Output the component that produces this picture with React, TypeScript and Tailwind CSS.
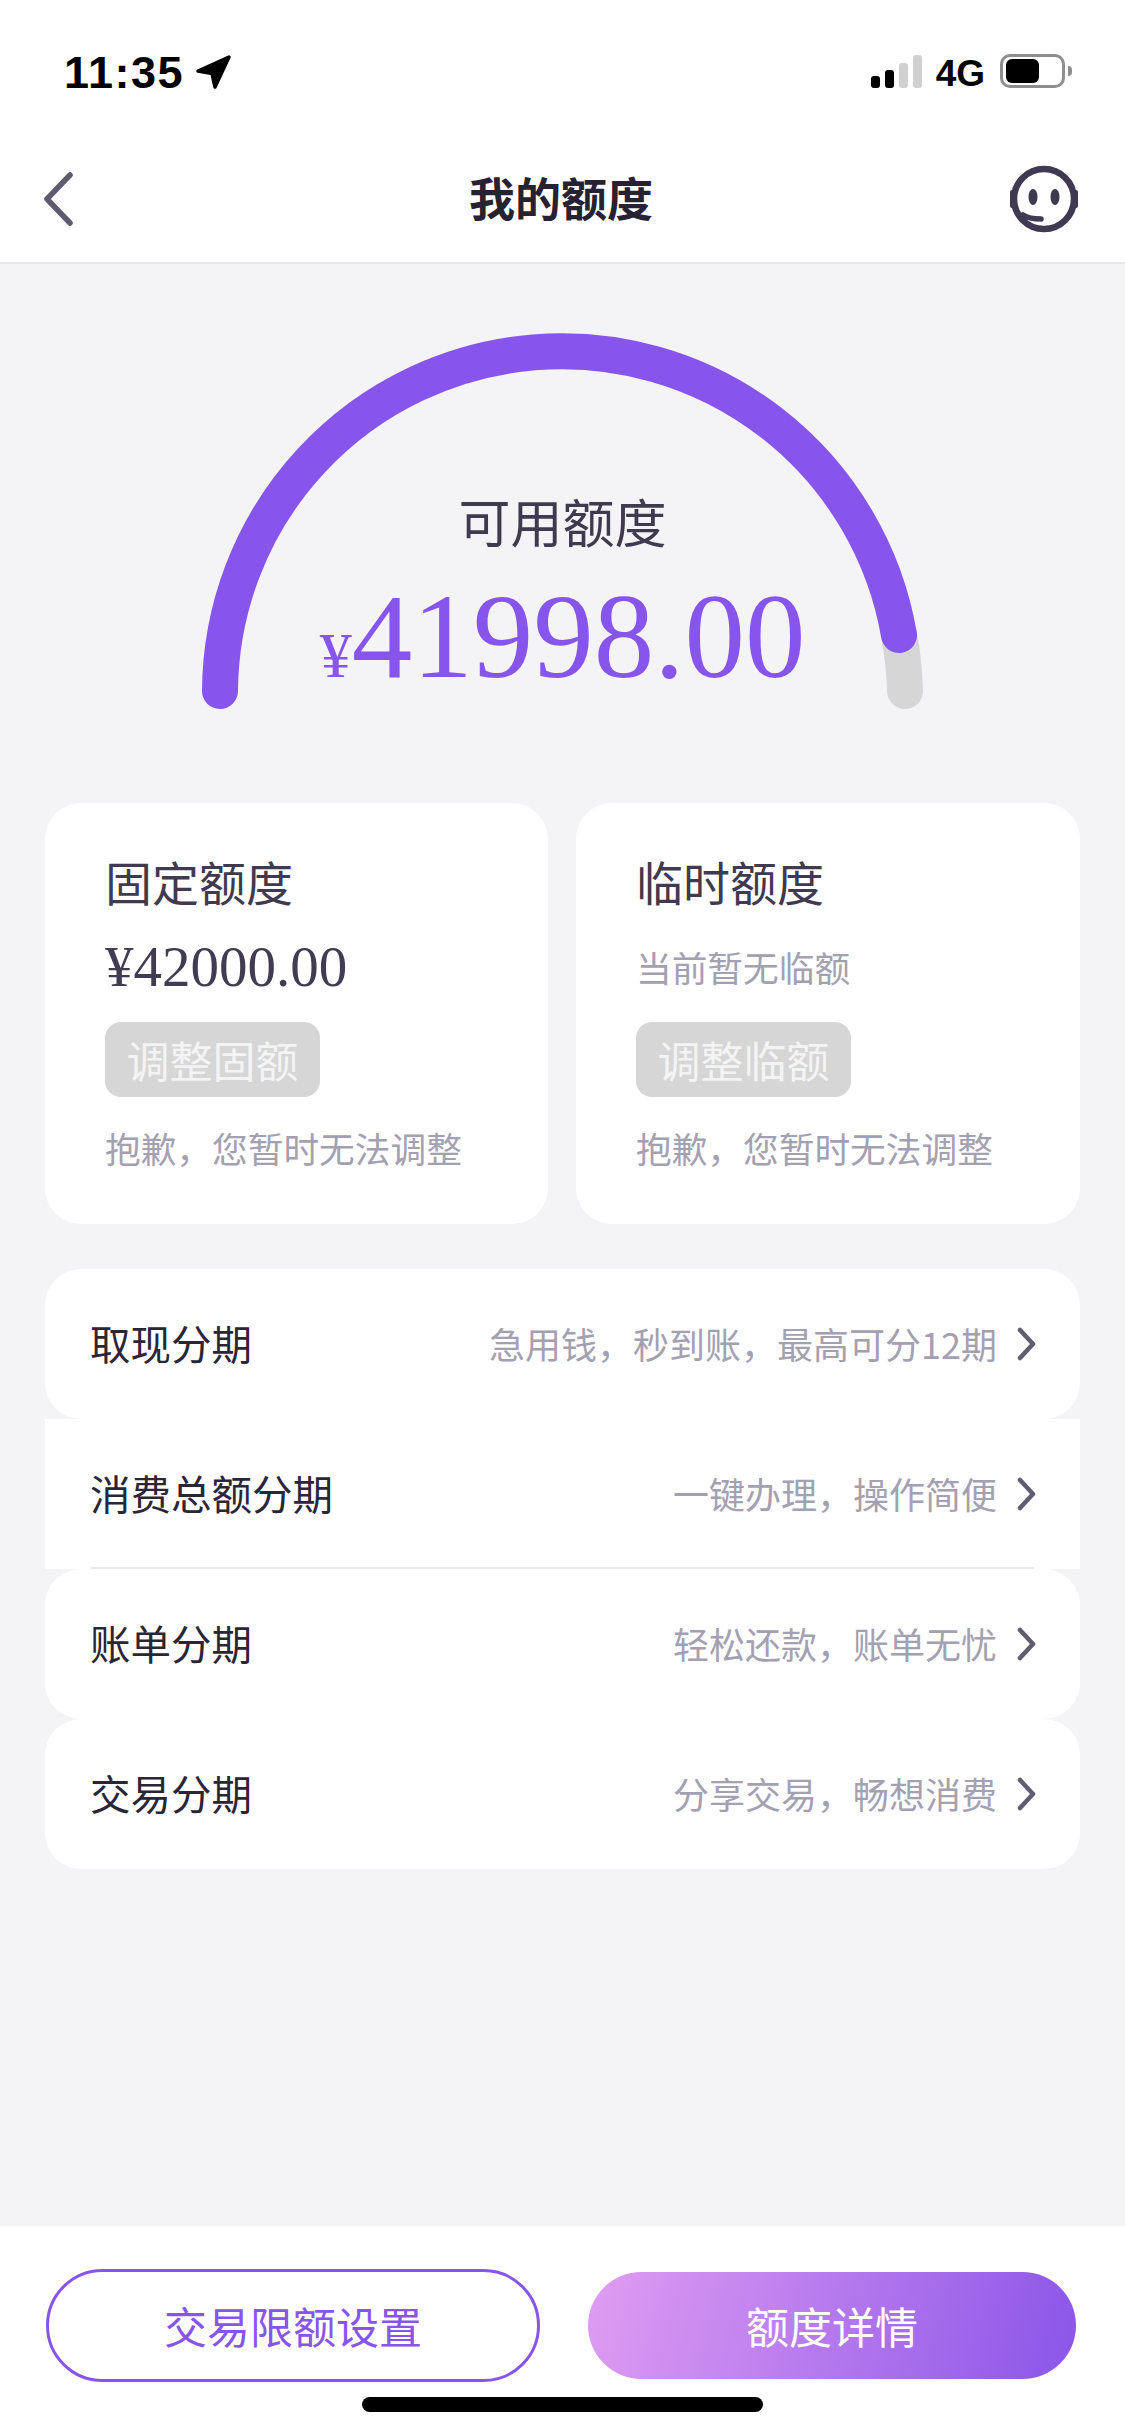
const cjk = "font-['Noto_Sans_CJK_SC','Noto_Sans',sans-serif]";

const StatusBar = () => (
    <div className="flex h-[120px] items-start justify-between pl-[64px] pr-[53px] pt-[54px]">
        <div className="flex items-start">
            <span className="font-['Liberation_Sans',sans-serif] text-[45px] font-bold leading-[38px] tracking-[1.5px] text-black">11:35</span>
            <svg className="ml-[11px]" width="38" height="38" viewBox="0 0 38 38">
                <path d="M34 3 L3 17 L17 19.5 L20 33 Z" fill="#000" stroke="#000" strokeWidth="3.5" strokeLinejoin="round"/>
            </svg>
        </div>
        <div className="flex h-[34px] items-end">
            {/* signal */}
            <div className="flex items-end gap-[5px]">
                <div className="h-[12px] w-[9px] rounded-[3px] bg-black"/>
                <div className="h-[18px] w-[9px] rounded-[3px] bg-black"/>
                <div className="h-[25px] w-[9px] rounded-[3px] bg-[#d0d0d0]"/>
                <div className="h-[33px] w-[9px] rounded-[3px] bg-[#d0d0d0]"/>
            </div>
            <span className="ml-[14px] font-['Liberation_Sans',sans-serif] text-[37px] font-bold leading-[28px] text-black">4G</span>
            {/* battery */}
            <div className="ml-[15px] flex items-center">
                <div className="flex h-[34px] w-[65px] items-center rounded-[10px] border-[3px] border-[#8e8e8e] pl-[3px]">
                    <div className="h-[24px] w-[33px] rounded-[6px] bg-black"/>
                </div>
                <div className="ml-[3px] h-[10px] w-[4px] rounded-r-full bg-[#8e8e8e]"/>
            </div>
        </div>
    </div>
);

const NavBar = () => (
    <div className="grid h-[144px] grid-cols-[70px_1fr_70px] items-center border-b-2 border-[#e8e8ea] bg-white pl-[43px] pr-[46px] pt-[15px]">
        <svg width="30" height="54" viewBox="0 0 30 54" fill="none">
            <path d="M27 3 L4 27 L27 51" stroke="#5f5a6e" strokeWidth="5.5" strokeLinecap="round" strokeLinejoin="round"/>
        </svg>
        <span className={`${cjk} pb-[6px] text-center text-[46px] font-bold leading-[60px] text-[#262233]`}>我的额度</span>
        <svg width="70" height="70" viewBox="0 0 70 70" fill="none">
            <circle cx="35" cy="35" r="30" stroke="#3f3a52" strokeWidth="6.5"/>
            <rect x="1" y="26" width="5" height="18" rx="2" fill="#3f3a52"/>
            <rect x="64" y="26" width="5" height="18" rx="2" fill="#3f3a52"/>
            <ellipse cx="24" cy="33" rx="4.5" ry="8" fill="#3f3a52"/>
            <ellipse cx="46" cy="33" rx="4.5" ry="8" fill="#3f3a52"/>
            <path d="M14 51 Q20 55 32 55" stroke="#3f3a52" strokeWidth="5.5" strokeLinecap="round"/>
        </svg>
    </div>
);

const Gauge = () => (
    <div className="relative h-[539px]">
        <svg className="absolute left-[200px] top-[66px]" width="725" height="380" viewBox="200 330 725 380" fill="none">
            <path d="M905 691 A342 342 0 0 0 899 635" stroke="#d6d6d6" strokeWidth="36" strokeLinecap="round"/>
            <path d="M220 691 A342 342 0 0 1 899 635" stroke="#8855ec" strokeWidth="36" strokeLinecap="round"/>
        </svg>
        <div className="absolute inset-x-0 top-[222px] flex flex-col items-center">
            <span className={`${cjk} text-[52px] leading-[70px] text-[#3f3a4f]`}>可用额度</span>
            <div className="mt-[20px] flex items-baseline font-['Liberation_Serif',serif] leading-[120px] text-[#8855ec]">
                <span className="text-[64px]">¥</span>
                <span className="text-[121px]">41998.00</span>
            </div>
        </div>
    </div>
);

const QuotaCard = ({title, value, valueIsMoney, action}: { title: string; value: string; valueIsMoney?: boolean; action: string }) => (
    <div className="flex h-[421px] flex-col items-start rounded-[36px] bg-white pl-[60px] pt-[45px]">
        <span className={`${cjk} text-[47px] leading-[66px] text-[#3f3a4f]`}>{title}</span>
        <div className="mt-[20px] flex h-[66px] items-center">
            {valueIsMoney ? (
                <span className="font-['Liberation_Serif',serif] text-[57px] text-[#413c52]">{value}</span>
            ) : (
                <span className={`${cjk} text-[35.7px] text-[#a3a1b1]`}>{value}</span>
            )}
        </div>
        <div className={`${cjk} mt-[22px] flex h-[75px] w-[215px] items-center justify-center rounded-[16px] bg-[#d6d6d6] text-[43px] text-[#f4f4f4]`}>
            {action}
        </div>
        <span className={`${cjk} mt-[26px] text-[35.7px] leading-[50px] text-[#a3a1b1]`}>抱歉，您暂时无法调整</span>
    </div>
);

const rows = [
    {title: "取现分期", hint: "急用钱，秒到账，最高可分12期", shape: "rounded-[36px]"},
    {title: "消费总额分期", hint: "一键办理，操作简便", shape: "", divider: true},
    {title: "账单分期", hint: "轻松还款，账单无忧", shape: "rounded-[36px]"},
    {title: "交易分期", hint: "分享交易，畅想消费", shape: "rounded-[36px]"},
];

const InstallmentRow = ({title, hint, shape, divider}: { title: string; hint: string; shape: string; divider?: boolean }) => (
    <div className={`relative flex h-[150px] items-center justify-between bg-white pl-[45px] pr-[43px] ${shape}`}>
        <span className={`${cjk} pb-[2px] text-[40.5px] leading-[56px] text-[#2a2637]`}>{title}</span>
        <div className="flex items-center">
            <span className={`${cjk} pb-[2px] text-[36px] leading-[50px] text-[#a3a1b1]`}>{hint}</span>
            <svg className="ml-[20px]" width="20" height="34" viewBox="0 0 20 34" fill="none">
                <path d="M3 3 L16 17 L3 31" stroke="#615c70" strokeWidth="4.5" strokeLinecap="round" strokeLinejoin="round"/>
            </svg>
        </div>
        {divider && <div className="absolute bottom-0 left-[46px] right-[46px] h-[2px] bg-[#e8e8ec]"/>}
    </div>
);

const Footer = () => (
    <div className="h-[209px] bg-white pt-[43px]">
        <div className="flex items-center justify-between pl-[46px] pr-[49px]">
            <div className={`${cjk} flex h-[113px] w-[494px] items-center justify-center rounded-full border-[3px] border-[#8855ec] text-[43px] text-[#8855ec]`}>
                交易限额设置
            </div>
            <div className={`${cjk} flex h-[107px] w-[488px] items-center justify-center rounded-full bg-[linear-gradient(105deg,#e09df2,#8a55e8)] text-[43px] text-white`}>
                额度详情
            </div>
        </div>
        <div className="mx-auto mt-[15px] h-[15px] w-[401px] rounded-full bg-black"/>
    </div>
);

export default function App() {
    return (
        <div className="flex h-[2435px] w-[1125px] flex-col overflow-hidden bg-white">
            <StatusBar/>
            <NavBar/>
            <main className="flex-1 bg-[#f4f4f6]">
                <Gauge/>
                <div className="grid grid-cols-[503px_504px] gap-[28px] px-[45px]">
                    <QuotaCard title="固定额度" value="¥42000.00" valueIsMoney action="调整固额"/>
                    <QuotaCard title="临时额度" value="当前暂无临额" action="调整临额"/>
                </div>
                <div className="mt-[45px] flex flex-col px-[45px]">
                    {rows.map((row) => (
                        <InstallmentRow key={row.title} {...row}/>
                    ))}
                </div>
            </main>
            <Footer/>
        </div>
    );
}
